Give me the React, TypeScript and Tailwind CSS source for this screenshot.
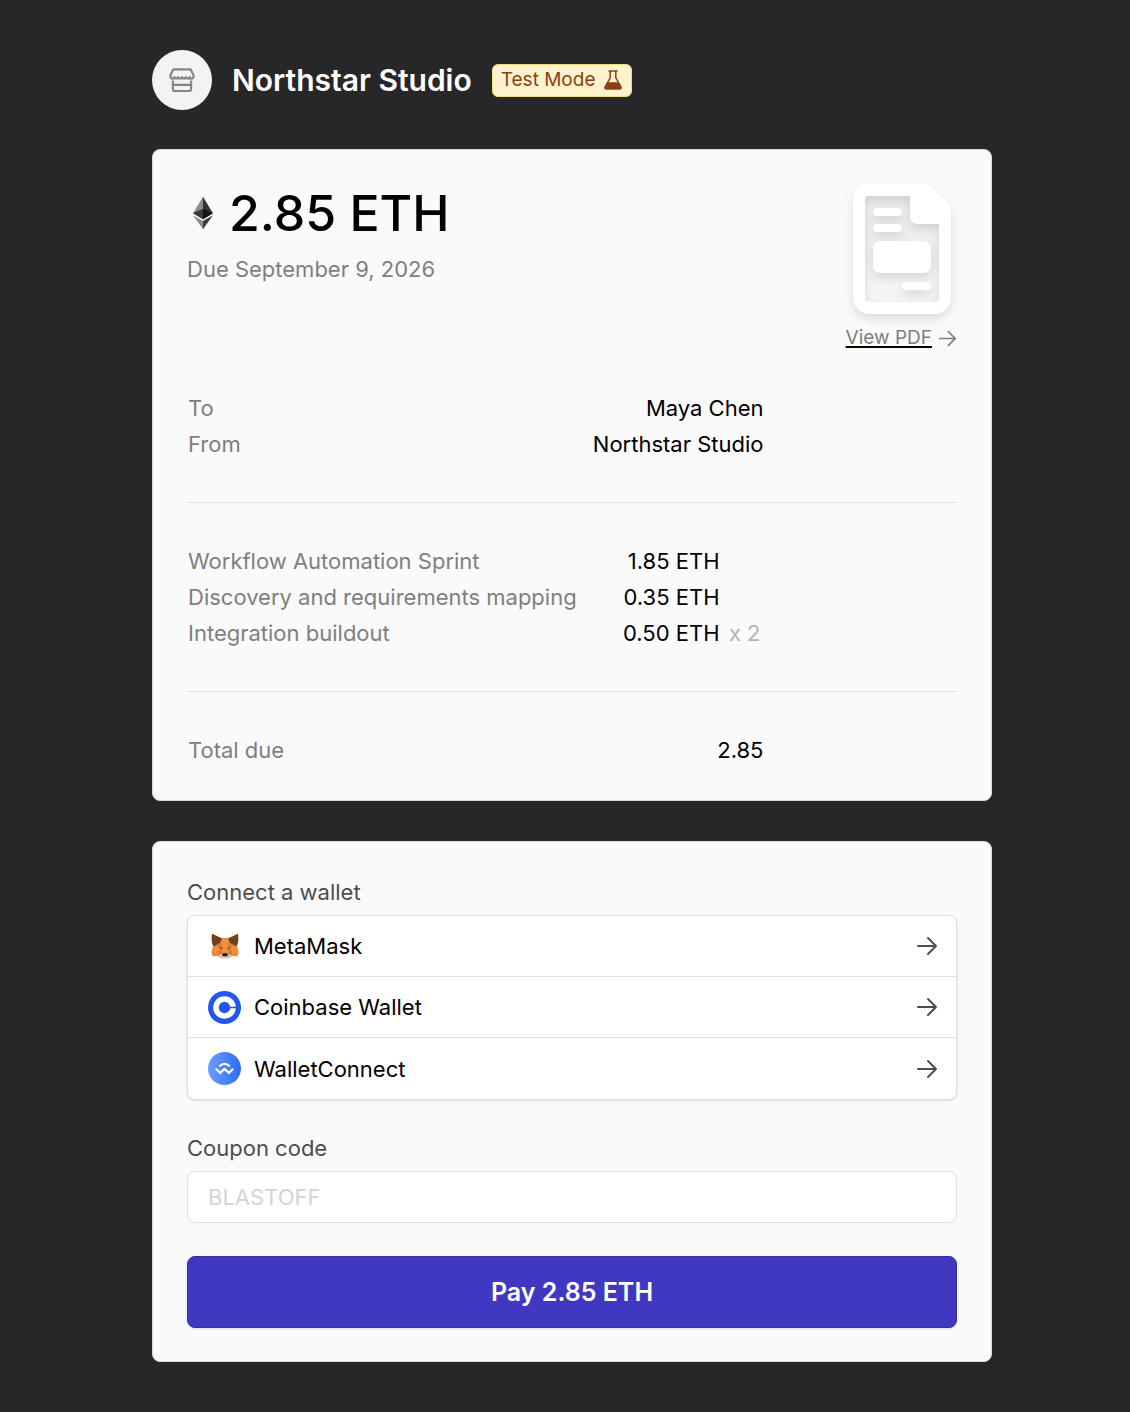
import React from "react";

const partyRows = [
  { label: "To", value: "Maya Chen" },
  { label: "From", value: "Northstar Studio" },
];

const lineItems = [
  { label: "Workflow Automation Sprint", price: "1.85 ETH", quantity: "" },
  { label: "Discovery and requirements mapping", price: "0.35 ETH", quantity: "" },
  { label: "Integration buildout", price: "0.50 ETH", quantity: "x 2" },
];

const wallets = [
  { name: "MetaMask", icon: <MetaMaskIcon /> },
  { name: "Coinbase Wallet", icon: <CoinbaseIcon /> },
  { name: "WalletConnect", icon: <WalletConnectIcon /> },
];

function StoreIcon() {
  return (
    <svg className="w-7 h-7" viewBox="0 0 28 28" fill="none" stroke="#858585" strokeWidth="2.200" strokeLinejoin="round" aria-hidden="true">
      <path d="M5.300 3.400h17.400l2.800 5.600v1.600c0 1.300-.9 2-2 2s-1.900-.6-1.900-1.400c0 .8-.9 1.200-1.900 1.200s-1.900-.5-1.900-1.200c0 .8-.9 1.200-1.900 1.200s-1.900-.5-1.900-1.200c0 .8-.9 1.200-1.900 1.200s-1.900-.5-1.900-1.200c0 .8-.9 1.200-1.900 1.200s-1.900-.5-1.900-1.200c0 .8-.9 1.400-1.900 1.400s-2-.7-2-2V9z" />
      <path d="M4.900 14.400v8.600a2 2 0 0 0 2 2h14.200a2 2 0 0 0 2-2v-8.600M4.900 18.800h18.200" />
    </svg>
  );
}

function FlaskIcon() {
  return (
    <svg className="w-5 h-5" viewBox="0 0 20 20" fill="none" aria-hidden="true">
      <path d="M5.500 1h9M7.200 1v6.800L2.200 16.500q-1 2.500 1.300 2.500h13q2.300 0 1.300-2.500L12.800 7.800V1" stroke="#8b4113" strokeWidth="1.500" strokeLinejoin="round" />
      <path d="M4.600 12.300h10.800l2.600 4.400q.8 2.300-1.400 2.300H3.400q-2.200 0-1.400-2.300z" fill="#8b4113" />
    </svg>
  );
}

function EthIcon() {
  return (
    <svg className="w-5 h-[34px]" viewBox="0 0 256 417" preserveAspectRatio="xMidYMid meet" aria-hidden="true">
      <path fill="#343434" d="M127.900 0l-2.800 9.500v275.700l2.800 2.800 127.900-75.600z" />
      <path fill="#8c8c8c" d="M127.900 0L0 212.400l127.900 75.600V154.200z" />
      <path fill="#3c3c3b" d="M127.900 312.200l-1.600 1.900v98.200l1.600 4.600L256 236.600z" />
      <path fill="#8c8c8c" d="M127.900 416.900v-104.700L0 236.600z" />
      <path fill="#141414" d="M127.900 288l127.900-75.600-127.900-58.200z" />
      <path fill="#393939" d="M0 212.400L127.900 288V154.200z" />
    </svg>
  );
}

function DocumentIcon() {
  return (
    <svg className="w-[100px] h-[132px] overflow-visible" viewBox="0 0 100 132" aria-hidden="true">
      <defs>
        <linearGradient id="page" x1="0" y1="0" x2="0" y2="1">
          <stop offset="0" stopColor="#ebebeb" />
          <stop offset="1" stopColor="#f6f6f6" />
        </linearGradient>
        <filter id="sheetShadow" x="-30%" y="-30%" width="160%" height="160%">
          <feDropShadow dx="0" dy="5" stdDeviation="5" floodColor="#000" floodOpacity="0.12" />
        </filter>
      </defs>
      <path fill="url(#page)" d="M10 10h50v29h28v81H10z" />
      <g fill="#fff" filter="url(#sheetShadow)">
        <path
          fillRule="evenodd"
          d="M18 0h50q7 0 12 5l14 13q5 5 5 12v84a17 17 0 0 1-17 17H18a17 17 0 0 1-17-17V17A17 17 0 0 1 18 0zM16 13q-3 0-3 3v100q0 3 3 3h68q3 0 3-3V41H66q-8 0-8-8V13z"
        />
        <rect x="21" y="25" width="29" height="8" rx="4" />
        <rect x="21" y="41" width="29" height="8" rx="4" />
        <rect x="21" y="58" width="58" height="32" rx="8" />
        <rect x="50" y="99" width="29" height="8" rx="4" />
      </g>
    </svg>
  );
}

function ArrowIcon({ className }: { className: string }) {
  return (
    <svg className={className} viewBox="0 0 22 22" fill="none" stroke="currentColor" strokeWidth="2" strokeLinecap="round" strokeLinejoin="round" aria-hidden="true">
      <path d="M2 11h18M12 3l8 8-8 8" />
    </svg>
  );
}

function MetaMaskIcon() {
  return (
    <svg className="w-7 h-[26px]" viewBox="0 0 28 26" aria-hidden="true">
      <path fill="#e8883a" d="M1 1l9.500 4h7L27 1l.3 8-1.300 5 1.600 5-1.300 4.500-5.300-.8-3.500 2.500h-7L7 22.700l-5.300.8L.4 19 2 14 .7 9z" />
      <path fill="#dc7632" d="M10.500 5l-2 7L2 14.500l4.500 4 1.500 4 3-3-1-6.500zM17.500 5l2 7 6.500 2.500-4.500 4-1.500 4-3-3 1-6.500z" />
      <path fill="#ee913f" d="M11 5h6l-.5 9 .5 6h-6l.5-6zM2 14.500l5-1.500 3 6-3 .5-6.500.5zM26 14.500L21 13l-3 6 3 .5 6.500.5z" />
      <path fill="#6f4020" d="M1 .8L10.800 5.500 8.800 10 3 13.300 1.500 11 .6 6zM27 .8l-9.800 4.700 2 4.500 5.800 3.300 1.500-2.300.9-5z" />
      <path fill="#a95431" d="M8 14.800l3.500-.8.300 1.800-1.800.5zM20 14.800l-3.500-.8-.3 1.800 1.800.5zM6 19l3-.8.500 1zM22 19l-3-.8-.5 1z" />
      <path fill="#d9c8bd" d="M8 22l3-1h6l3 1-3 3.300h-6z" />
      <path fill="#1b1b1b" d="M11.800 20.300h4.400l.6 2.200-.8.800h-4l-.8-.8z" />
    </svg>
  );
}

function CoinbaseIcon() {
  return (
    <svg className="w-[33px] h-[33px]" viewBox="0 0 33 33" aria-hidden="true">
      <circle cx="16.500" cy="16.500" r="16.500" fill="#2354f5" />
      <circle cx="16.500" cy="16.500" r="11.300" fill="#fff" />
      <circle cx="16.500" cy="16.500" r="5.700" fill="#2354f5" />
      <path fill="#2354f5" d="M20 15.700h9v1.600h-9z" />
    </svg>
  );
}

function WalletConnectIcon() {
  return (
    <svg className="w-[33px] h-[33px]" viewBox="0 0 33 33" aria-hidden="true">
      <defs>
        <linearGradient id="walletConnect" x1="0" y1="0" x2="1" y2="0">
          <stop offset="0" stopColor="#6b9df8" />
          <stop offset="1" stopColor="#2d6df6" />
        </linearGradient>
      </defs>
      <circle cx="16.500" cy="16.500" r="16.500" fill="url(#walletConnect)" />
      <g fill="none" stroke="#fff" strokeWidth="2.200" strokeLinejoin="round">
        <path d="M11.200 14.200q5.300-4.800 10.600 0" />
        <path d="M7.900 16.800l4.300 4.200 4.300-4.200 4.300 4.200 4.300-4.200" />
      </g>
    </svg>
  );
}

export default function App() {
  return (
    <main className="min-h-screen bg-[#272729] pl-3.5 py-[50px] font-[Inter,sans-serif] text-[22px] leading-9 text-black">
      <div className="max-w-[840px] mx-auto">
        <header className="flex items-center mb-[39px]">
          <div className="w-[60px] h-[60px] mr-5 rounded-full bg-[#f3f3f3] flex items-center justify-center">
            <StoreIcon />
          </div>
          <h1 className="text-[30px] font-semibold text-white mr-5">Northstar Studio</h1>
          <span className="flex items-center gap-2 h-[33px] px-2 rounded-md border border-[#f2de7c] bg-[#fcf2cb] text-[19px] text-[#8b4113]">
            Test Mode
            <FlaskIcon />
          </span>
        </header>

        <section className="mb-10 px-[34px] pt-[33px] pb-8 rounded-lg border border-[#d9d9d9] bg-[#fafafa]">
          <div className="flex justify-between items-start mb-[34px]">
            <div>
              <h2 className="flex items-center gap-4 pl-[6px] h-[60px] text-[50px] font-medium">
                <EthIcon />
                2.85 ETH
              </h2>
              <p className="mt-2 text-[#7f7f7f]">Due September 9, 2026</p>
            </div>
            <div className="flex flex-col items-end">
              <div className="mr-[5px]">
                <DocumentIcon />
              </div>
              <a href="#invoice-pdf" className="mt-[5px] flex items-center gap-[6px] text-[19px] leading-9 text-[#7f7f7f]">
                <span className="underline decoration-black decoration-2 underline-offset-2">View PDF</span>
                <ArrowIcon className="w-[19px] h-[19px]" />
              </a>
            </div>
          </div>

          <table className="w-3/4">
            <tbody>
              {partyRows.map((row) => (
                <tr key={row.label}>
                  <th scope="row" className="px-px text-left font-normal text-[#7f7f7f]">{row.label}</th>
                  <td className="px-px text-right">{row.value}</td>
                </tr>
              ))}
            </tbody>
          </table>

          <hr className="my-10 border-[#dfdfdf]" />

          <table className="w-3/4">
            <tbody>
              {lineItems.map((item) => (
                <tr key={item.label}>
                  <th scope="row" className="px-px text-left font-normal text-[#7f7f7f]">{item.label}</th>
                  <td className="px-px text-right">{item.price}</td>
                  <td className="w-11 pr-1 text-right text-[#b3b3b3]">{item.quantity}</td>
                </tr>
              ))}
            </tbody>
          </table>

          <hr className="my-10 border-[#dfdfdf]" />

          <table className="w-3/4">
            <tbody>
              <tr>
                <th scope="row" className="px-px text-left font-normal text-[#7f7f7f]">Total due</th>
                <td className="px-px text-right">2.85</td>
              </tr>
            </tbody>
          </table>
        </section>

        <section className="px-[34px] pt-8 pb-[33px] rounded-lg border border-[#d9d9d9] bg-[#fafafa]">
          <h3 className="text-[#4d4d4d]">Connect a wallet</h3>
          <div className="mt-[5px] mb-[30px] rounded-lg border border-[#dfdfdf] bg-white shadow-sm divide-y divide-[#dfdfdf]">
            {wallets.map((wallet) => (
              <button key={wallet.name} type="button" className="w-full h-[61px] pl-5 pr-[18px] flex items-center cursor-pointer">
                <span className="w-[33px] mr-[13px] flex justify-center">{wallet.icon}</span>
                {wallet.name}
                <ArrowIcon className="w-[22px] h-[22px] ml-auto text-[#4d4d4d]" />
              </button>
            ))}
          </div>

          <label htmlFor="coupon" className="block text-[#4d4d4d]">Coupon code</label>
          <input
            id="coupon"
            type="text"
            placeholder="BLASTOFF"
            className="block mt-[5px] w-full h-[52px] px-5 rounded-lg border border-[#dfdfdf] bg-white placeholder:text-[#d4d4d8]"
          />

          <button
            type="button"
            className="mt-[33px] w-full h-[72px] rounded-lg border border-[#372fa3] bg-[#4138c2] text-[25px] font-semibold text-white shadow-sm cursor-pointer"
          >
            Pay 2.85 ETH
          </button>
        </section>
      </div>
    </main>
  );
}
